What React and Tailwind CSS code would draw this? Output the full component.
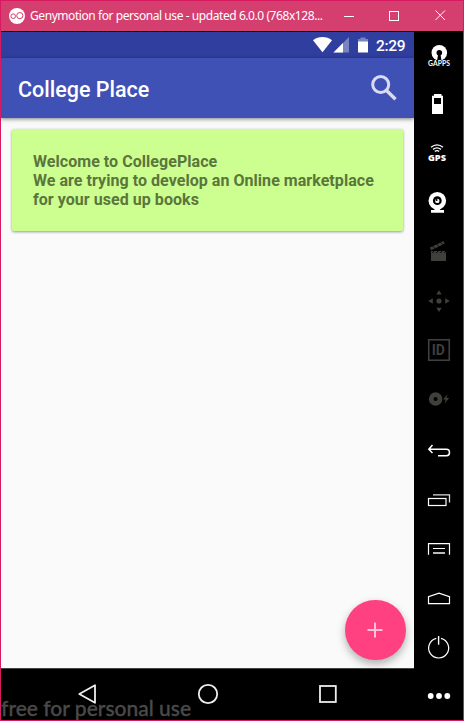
import React from "react";

function Cell({ children, className = "" }) {
  return (
    <svg viewBox="0 0 49 49" className={`block h-[49px] w-[49px] shrink-0 ${className}`} fill="none">
      {children}
    </svg>
  );
}

function TitleBar() {
  return (
    <header className="flex h-[30px] shrink-0 items-center bg-[#d43f6f] pl-2 text-white">
      <svg viewBox="0 0 16 16" className="h-4 w-4 shrink-0" fill="none">
        <circle cx="8" cy="8" r="8" fill="#fff" />
        <circle cx="4.2" cy="8.2" r="2.3" stroke="#d43f6f" strokeWidth="1" />
        <circle cx="10.8" cy="7.6" r="3.1" stroke="#d43f6f" strokeWidth="1" />
      </svg>
      <span className="ml-[5px] w-[299px] whitespace-nowrap font-['Noto_Sans',sans-serif] text-[12px] leading-4 tracking-[-0.43px]">
        Genymotion for personal use - updated 6.0.0 (768x128...
      </span>
      <svg viewBox="0 0 134 30" className="h-[30px] w-[134px] shrink-0" stroke="#fff">
        <path d="M15 15.5h10" />
        <rect x="60.5" y="10.5" width="9" height="9" fill="none" />
        <path d="M106.5 9.5l9.5 9.5M116 9.5l-9.5 9.5" />
      </svg>
    </header>
  );
}

function StatusBar() {
  return (
    <div className="flex h-[27px] shrink-0 items-center justify-end border-t border-black bg-[#303f9f] pr-[9px]">
      <svg viewBox="0 0 56 16" className="h-4 w-14">
        <path d="M0 3.2C5.5-1 13.500-1 19 3.2L9.5 15.2z" fill="#fff" />
        <path d="M36 0v15.5H20.500z" fill="#7983bf" />
        <path d="M30 6v9.5h-9.500z" fill="#fff" />
        <path d="M47.5 0.5h5V2H55v3H45V2h2.500z" fill="#7983bf" />
        <path d="M45 4.5h10v11H45z" fill="#fff" />
      </svg>
      <span className="ml-[7px] mt-px w-[29px] whitespace-nowrap font-[Roboto,sans-serif] text-[15.5px] font-medium leading-5 tracking-[-0.3px] text-white">2:29</span>
    </div>
  );
}

function AppBar() {
  return (
    <div className="z-10 flex h-[60px] shrink-0 items-center justify-between bg-[#3f51b5] pl-[17px] pr-[17px] shadow-[0_1px_4px_rgba(0,0,0,0.5)]">
      <h1 className="pt-[3px] font-[Roboto,sans-serif] text-[21.5px] font-medium leading-7 text-white">College Place</h1>
      <svg viewBox="0 0 26 26" className="h-[26px] w-[26px]" fill="none" stroke="#d9dcf0">
        <circle cx="9.7" cy="9.5" r="8" strokeWidth="3" />
        <path d="M15.500 15.500l9 8.700" strokeWidth="3.4" />
      </svg>
    </div>
  );
}

function Sidebar() {
  return (
    <aside className="flex w-[49px] shrink-0 flex-col bg-black">
      <Cell>
        <circle cx="25.3" cy="21.8" r="7.8" fill="#fff" />
        <circle cx="25.3" cy="21.8" r="2.8" fill="#000" />
        <path d="M24.200 23L23 30h4.600L26.400 23z" fill="#000" />
        <path d="M14 29.200h22v6H14z" fill="#000" />
        <text x="14" y="35" textLength="22" fontSize="6.8" fill="#fff" className="font-[Lato,sans-serif] font-bold">GAPPS</text>
      </Cell>
      <Cell>
        <path fillRule="evenodd" d="M20 14h7.5v1.7H29V34H18V15.700h2zM20 18v6h7v-6z" fill="#fff" />
      </Cell>
      <Cell>
        <g stroke="#fff" strokeWidth="1.4">
          <path d="M17 18.300q6-4.800 12 0M19 20.400q4-3 8 0M20.800 22.400q2.200-1.500 4.400 0" />
        </g>
        <text x="14" y="31.500" textLength="18" lengthAdjust="spacingAndGlyphs" fontSize="8" fill="#fff" className="font-['Open_Sans',sans-serif] font-extrabold">GPS</text>
      </Cell>
      <Cell>
        <circle cx="23.3" cy="22.7" r="8.8" fill="#fff" />
        <circle cx="23.3" cy="22.7" r="4.4" fill="#000" />
        <circle cx="23.3" cy="22.9" r="2.2" fill="#fff" />
        <circle cx="22.6" cy="22" r="1" fill="#000" />
        <path d="M20.500 30h5.600v2H30v2.700H17V32h3.500z" fill="#fff" />
      </Cell>
      <Cell>
        <path d="M17 24H32V34H17z" fill="#3f3f3b" />
        <path d="M20 24l-1.500 2M24 24l-1.500 2M28 24l-1.500 2M32 24l-1.500 2" stroke="#000" strokeWidth="1" />
        <path d="M16 20.500L29.500 14 30.500 16.800 17 23.200z" fill="#3f3f3b" />
        <path d="M18.500 19l2.500 2.600M22.500 17l2.500 2.600M26.500 15.200l2.500 2.600" stroke="#000" strokeWidth="0.8" />
      </Cell>
      <Cell>
        <path d="M25 14.200l2.700 4.300h-5.400zM25 36l2.700-4.300h-5.400zM14.200 25l4.600-2.800v5.600zM35.800 25l-4.600-2.800v5.600z" fill="#3f3f3b" />
        <circle cx="25" cy="25" r="2.6" fill="#3f3f3b" />
      </Cell>
      <Cell>
        <rect x="14.750" y="14.750" width="20.500" height="20.500" stroke="#3f3f3b" strokeWidth="1.6" />
        <text x="17.700" y="29.900" fontSize="14" fill="#3f3f3b" className="font-[Roboto,sans-serif] font-bold">ID</text>
      </Cell>
      <Cell>
        <circle cx="21.6" cy="25" r="4.4" stroke="#3f3f3b" strokeWidth="4.7" />
        <path d="M33.500 20.300l-4.300 5.300h2.600l-1.400 4.200 4.800-5.700h-2.700z" fill="#3f3f3b" />
      </Cell>
      <Cell className="mt-[3px]">
        <path d="M18.500 19l-3.700 4.300 3.700 3.700M15 23.300h17.500q3 0 3 3.200t-3 3.200H24" stroke="#fff" strokeWidth="1.5" />
      </Cell>
      <Cell>
        <rect x="14.500" y="23.500" width="17.500" height="7" stroke="#fff" strokeWidth="1.2" />
        <path d="M19 19.800h16.500v7.700" stroke="#ddd" strokeWidth="1.3" />
      </Cell>
      <Cell>
        <path d="M14.500 30.700V19.700h21v11" stroke="#fff" strokeWidth="1.2" />
        <path d="M19 24.500h12" stroke="#fff" />
        <path d="M19 29h12" stroke="#bbb" strokeWidth="2" />
      </Cell>
      <Cell>
        <path d="M14.500 30.700V23.800L25 20.200l10.500 3.600v6.900z" stroke="#fff" strokeWidth="1.2" />
      </Cell>
      <Cell>
        <path d="M22.300 16.300A10 10 0 1 0 27 16.300" stroke="#fff" strokeWidth="1.2" />
        <path d="M24.600 14v8.700" stroke="#fff" strokeWidth="1.4" />
      </Cell>
      <Cell>
        <g fill="#fff">
          <circle cx="16.7" cy="25" r="2.9" />
          <circle cx="25" cy="25" r="2.9" />
          <circle cx="33.3" cy="25" r="2.9" />
        </g>
      </Cell>
    </aside>
  );
}

function NavBar() {
  return (
    <nav className="relative h-[52px] shrink-0 border-t border-[#444] bg-black">
      <span className="absolute left-0 top-[27px] whitespace-nowrap font-[Lato,sans-serif] text-[21px] font-medium leading-6 text-[#4a4a4a] [-webkit-text-stroke:0.3px_#4a4a4a]">
        free for personal use
      </span>
      <div className="relative flex h-[50px] items-center justify-between pl-[76px] pr-[76px]">
        <svg viewBox="0 0 20 22" className="h-[22px] w-5" fill="none" stroke="#eee" strokeWidth="1.8" strokeLinejoin="round">
          <path d="M18 2.200v17.600L2.300 11z" />
        </svg>
        <svg viewBox="0 0 22 22" className="h-[22px] w-[22px]" fill="none" stroke="#eee" strokeWidth="1.8">
          <circle cx="11" cy="11" r="9.2" />
        </svg>
        <svg viewBox="0 0 20 22" className="h-[22px] w-5" fill="none" stroke="#eee" strokeWidth="1.8">
          <rect x="2" y="3" width="15.800" height="16" />
        </svg>
      </div>
    </nav>
  );
}

export default function App() {
  return (
    <div className="flex h-[721px] w-[464px] flex-col overflow-hidden border border-[#d81b60] bg-black">
      <TitleBar />
      <div className="flex min-h-0 flex-1">
        <div className="flex w-[413px] shrink-0 flex-col">
          <StatusBar />
          <AppBar />
          <main className="relative flex-1 bg-[#fafafa] px-[11px] pt-[11px]">
            <section className="h-[102px] rounded-[2px] bg-[#ccff90] px-[21px] pt-[23px] font-[Roboto,sans-serif] text-[16px] font-bold leading-[19px] tracking-[0.045px] text-[#5b753c] shadow-[0_1px_3px_rgba(0,0,0,0.4)]">
              <p>Welcome to CollegePlace</p>
              <p className="whitespace-nowrap">We are trying to develop an Online marketplace</p>
              <p>for your used up books</p>
            </section>
            <button className="absolute bottom-2 right-[8.5px] flex h-[60.500px] w-[60.500px] items-center justify-center rounded-full bg-[#ff4081] shadow-[0_4px_8px_rgba(0,0,0,0.3)]">
              <svg viewBox="0 0 16 16" className="h-4 w-4" stroke="#ffc3d7" strokeWidth="2">
                <path d="M8 0.500v15M0.500 8h15" />
              </svg>
            </button>
          </main>
          <NavBar />
        </div>
        <Sidebar />
      </div>
    </div>
  );
}
